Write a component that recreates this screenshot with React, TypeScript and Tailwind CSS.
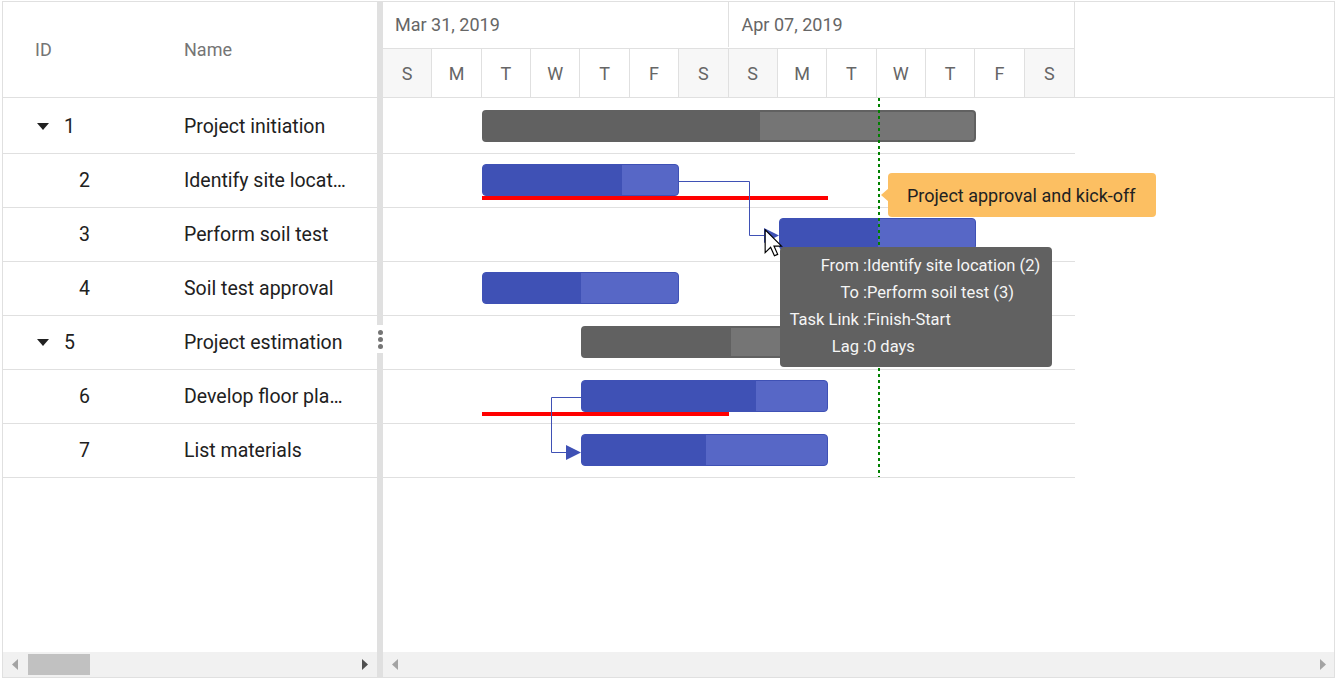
import React from 'react'

const days = ['S', 'M', 'T', 'W', 'T', 'F', 'S', 'S', 'M', 'T', 'W', 'T', 'F', 'S']

const tasks = [
  { id: 1, name: 'Project initiation', parent: true },
  { id: 2, name: 'Identify site location', parent: false },
  { id: 3, name: 'Perform soil test', parent: false },
  { id: 4, name: 'Soil test approval', parent: false },
  { id: 5, name: 'Project estimation', parent: true },
  { id: 6, name: 'Develop floor plan for estimation', parent: false },
  { id: 7, name: 'List materials', parent: false },
]

// bar geometry in px, relative to the chart body
const bars = [
  { left: 99, top: 12, width: 494, progress: 278, parent: true },
  { left: 99, top: 66, width: 197, progress: 140, parent: false },
  { left: 396, top: 120, width: 197, progress: 99, parent: false },
  { left: 99, top: 174, width: 197, progress: 99, parent: false },
  { left: 198, top: 228, width: 247, progress: 150, parent: true },
  { left: 198, top: 282, width: 247, progress: 175, parent: false },
  { left: 198, top: 336, width: 247, progress: 125, parent: false },
]

const baselines = [
  { left: 99, top: 98, width: 346 },
  { left: 99, top: 314, width: 247 },
]

function Caret() {
  return (
    <svg width="12" height="7" viewBox="0 0 12 7" className="shrink-0">
      <path d="M0 0 L12 0 L6 7 Z" fill="#212121" />
    </svg>
  )
}

function ArrowLeft({ color }: { color: string }) {
  return (
    <svg width="6" height="11" viewBox="0 0 6 11">
      <path d="M6 0 L0 5.5 L6 11 Z" fill={color} />
    </svg>
  )
}

function ArrowRight({ color }: { color: string }) {
  return (
    <svg width="6" height="11" viewBox="0 0 6 11">
      <path d="M0 0 L6 5.5 L0 11 Z" fill={color} />
    </svg>
  )
}

function Bar({ left, top, width, progress, parent }: { left: number; top: number; width: number; progress: number; parent: boolean }) {
  return (
    <div
      className={
        parent
          ? 'absolute h-[32px] rounded-[4px] border-2 border-[#616161] bg-[#757575] overflow-hidden'
          : 'absolute h-[32px] rounded-[4px] border border-[#3f51b5] bg-[#5767c6] overflow-hidden'
      }
      style={{ left, top, width }}
    >
      <div
        className={parent ? 'h-full bg-[#616161]' : 'h-full bg-[#3f51b5]'}
        style={{ width: progress - (parent ? 2 : 1) }}
      />
    </div>
  )
}

function Cursor() {
  return (
    <svg width="20" height="28" viewBox="0 0 13 19" className="absolute left-[381px] top-[131px]">
      <path d="M0.5 0.5 L0.5 16 L4.2 12.4 L6.8 18.2 L9 17.2 L6.5 11.6 L11.6 11.6 Z" fill="#fff" stroke="#000" strokeWidth="0.8" strokeLinejoin="miter" />
    </svg>
  )
}

export default function App() {
  return (
    <div className="w-[1336px] h-[680px] bg-white font-['Roboto',sans-serif] overflow-hidden">
      <div className="ml-[2px] mt-[1px] w-[1333px] h-[677px] border border-[#e0e0e0] flex">
        {/* Tree grid */}
        <div className="w-[374px] flex flex-col shrink-0">
          <div className="h-[96px] border-b border-[#e0e0e0] flex items-center text-[18px] text-[#757575] pb-[1px]">
            <div className="w-[169px] pl-[32px]">ID</div>
            <div className="pl-[12px]">Name</div>
          </div>
          <div className="pt-[2px] flex-1">
            {tasks.map((t) => (
              <div key={t.id} className="h-[54px] border-b border-[#e0e0e0] flex items-center text-[19.5px] text-[#212121]">
                <div className="w-[169px] flex items-center">
                  {t.parent ? (
                    <div className="flex items-center pl-[34px] gap-[15px]">
                      <Caret />
                      <span>{t.id}</span>
                    </div>
                  ) : (
                    <span className="pl-[76px]">{t.id}</span>
                  )}
                </div>
                <div className="w-[178px] pl-[12px] truncate">{t.name}</div>
              </div>
            ))}
          </div>
          <div className="h-[25px] bg-[#f1f1f1] flex items-center px-[9px] gap-[10px]">
            <ArrowLeft color="#a3a3a3" />
            <div className="w-[62px] h-[21px] bg-[#c1c1c1]" />
            <div className="flex-1" />
            <ArrowRight color="#505050" />
          </div>
        </div>

        {/* Splitter */}
        <div className="w-[6px] shrink-0 bg-[#e0e0e0] flex flex-col">
          <div className="h-[323px]" />
          <div className="h-[28px] bg-white flex flex-col items-center justify-center gap-[2px]">
            <div className="w-[5px] h-[5px] rounded-full bg-[#757575]" />
            <div className="w-[5px] h-[5px] rounded-full bg-[#757575]" />
            <div className="w-[5px] h-[5px] rounded-full bg-[#757575]" />
          </div>
        </div>

        {/* Chart */}
        <div className="flex-1 flex flex-col min-w-0">
          <div className="h-[96px] border-b border-[#e0e0e0] shrink-0">
            <div className="w-[692px] h-full border-r border-[#e0e0e0] flex flex-col text-[18px] text-[#666666]">
              <div className="h-[47px] border-b border-[#e0e0e0] flex pb-[1px]">
                <div className="flex-1 border-r border-[#e0e0e0] pl-[12px] flex items-center">Mar 31, 2019</div>
                <div className="flex-1 pl-[13px] flex items-center">Apr 07, 2019</div>
              </div>
              <div className="flex-1 grid grid-cols-[repeat(14,minmax(0,1fr))]">
                {days.map((d, i) => (
                  <div
                    key={i}
                    className={
                      (d === 'S' ? 'bg-[#f7f7f7] ' : 'bg-white ') +
                      (i < 13 ? 'border-r border-[#e0e0e0] ' : '') +
                      'flex items-center justify-center'
                    }
                  >
                    {d}
                  </div>
                ))}
              </div>
            </div>
          </div>

          <div className="relative flex-1">
            <div className="pt-[2px]">
              {tasks.map((t) => (
                <div key={t.id} className="w-[692px] h-[54px] border-b border-[#e0e0e0]" />
              ))}
            </div>

            {baselines.map((b, i) => (
              <div key={i} className="absolute h-[4px] bg-[#ff0000]" style={{ left: b.left, top: b.top, width: b.width }} />
            ))}

            {bars.map((b, i) => (
              <Bar key={i} {...b} />
            ))}

            {/* connectors */}
            <svg className="absolute left-0 top-0" width="692" height="380">
              <path d="M296 83.5 H366.5 V137.5 H381" fill="none" stroke="#3f51b5" strokeWidth="1" />
              <path d="M381 130 L396 137.5 L381 145 Z" fill="#3f51b5" />
              <path d="M198 299.5 H168.5 V354.5 H183" fill="none" stroke="#3f51b5" strokeWidth="1" />
              <path d="M183 347 L198 354.5 L183 362 Z" fill="#3f51b5" />
            </svg>

            {/* event marker */}
            <svg className="absolute left-[495px] top-0" width="2" height="379">
              <line x1="1" y1="0" x2="1" y2="379" stroke="#008000" strokeWidth="2" strokeDasharray="3 3" />
            </svg>

            <div className="absolute left-[505px] top-[75px] w-[268px] h-[44px] rounded-[4px] bg-[#fcbf62] flex items-center pl-[19px] text-[18px] text-[#212121]">
              Project approval and kick-off
            </div>
            <svg className="absolute left-[498px] top-[90px]" width="8" height="14" viewBox="0 0 8 14">
              <path d="M8 0 L0 7 L8 14 Z" fill="#fcbf62" />
            </svg>

            <Cursor />

            {/* dependency tooltip */}
            <div className="absolute left-[397px] top-[149px] w-[272px] h-[120px] rounded-[4px] bg-[#616161] text-[#f5f5f5] text-[16.5px] py-[6px] pl-[11px]">
              <div className="grid grid-cols-[76px_1fr]">
                {[
                  ['From :', 'Identify site location (2)'],
                  ['To :', 'Perform soil test (3)'],
                  ['Task Link :', 'Finish-Start'],
                  ['Lag :', '0 days'],
                ].map(([k, v]) => (
                  <React.Fragment key={k}>
                    <div className="h-[27px] flex items-center justify-end whitespace-nowrap">{k}</div>
                    <div className="h-[27px] flex items-center whitespace-nowrap">{v}</div>
                  </React.Fragment>
                ))}
              </div>
            </div>
          </div>

          <div className="h-[25px] bg-[#f1f1f1] flex items-center pl-[9px] pr-[8px] shrink-0">
            <ArrowLeft color="#a3a3a3" />
            <div className="flex-1" />
            <ArrowRight color="#a3a3a3" />
          </div>
        </div>
      </div>
    </div>
  )
}
